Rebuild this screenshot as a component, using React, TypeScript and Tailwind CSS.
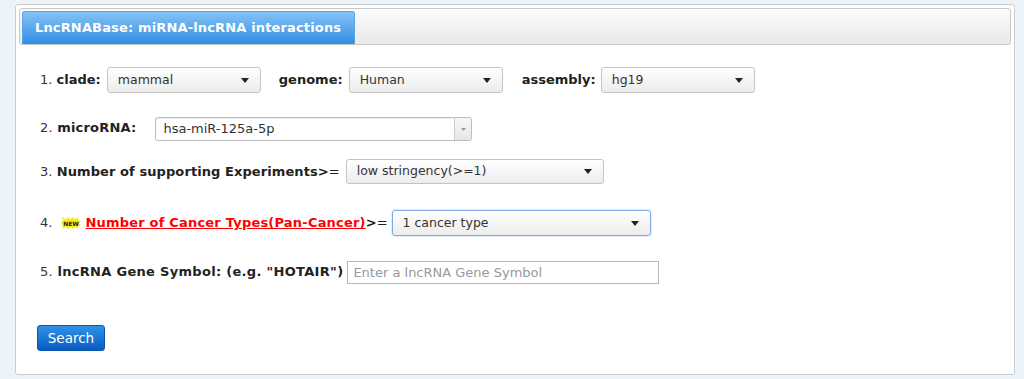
import { ReactNode } from "react";

const Caret = () => (
  <svg width="8" height="5" viewBox="0 0 8 5" className="shrink-0">
    <path d="M0 0h8L4 5z" fill="#222" />
  </svg>
);

interface SelectBoxProps {
  value: string;
  className?: string;
  focused?: boolean;
}

const SelectBox = ({ value, className = "", focused }: SelectBoxProps) => (
  <div
    className={`flex items-center justify-between rounded-[3px] border bg-gradient-to-b from-white to-[#ececec] pl-[10px] pr-[11px] text-[12.5px] text-[#333] ${
      focused ? "border-[#7ea9e6] shadow-[0_0_2px_#9ec3f0]" : "border-[#c4c4c4]"
    } ${className}`}
  >
    <span>{value}</span>
    <Caret />
  </div>
);

const Label = ({ num, children, className = "" }: { num: string; children: ReactNode; className?: string }) => (
  <span className={`text-[13px] text-[#222] ${className}`}>
    <span className="font-normal text-[#333]">{num} </span>
    <span className="font-bold">{children}</span>
  </span>
);

const NewBadge = () => (
  <svg width="20" height="12" viewBox="0 0 20 12" className="ml-[9px] mr-[4px] shrink-0">
    <polygon
      points="0,6 2,3 1,0 5,2 7,0 9,2 12,0 14,2 17,0 17,3 20,4 18,6 20,8 17,9 17,12 14,10 12,12 9,10 7,12 5,10 1,12 2,9"
      fill="#f6f01a"
    />
    <text x="10" y="8.5" textAnchor="middle" fontSize="6" fontWeight="bold" fill="#222" fontFamily="'DejaVu Sans', sans-serif">
      NEW
    </text>
  </svg>
);

export default function App() {
  return (
    <div className="min-h-[379px] bg-[#ecf3f9] px-[15px] pt-[4px] font-['DejaVu_Sans','Verdana',sans-serif]">
      <div className="h-[371px] w-[1000px] rounded-[3px] border border-[#c9cdd1] bg-white p-[3px]">
        {/* tab header */}
        <div className="flex h-[37px] items-end rounded-[3px] border border-[#c8c8c8] bg-gradient-to-b from-[#fbfbfb] to-[#e9e9e9] px-[2px]">
          <div className="flex h-[33px] w-[333px] items-center rounded-t-[3px] border border-b-0 border-[#5aa3e6] bg-gradient-to-b from-[#84c2f5] to-[#2c8de3] pl-[12px] text-[13px] font-bold tracking-[0.15px] text-white">
            LncRNABase: miRNA-lncRNA interactions
          </div>
        </div>

        <div className="pl-[21px]">
          {/* 1 */}
          <div className="mt-[21px] flex h-[26px] items-center pt-[2px]">
            <Label num="1.">clade:</Label>
            <SelectBox value="mammal" className="ml-[6px] h-[26px] w-[154px]" />
            <span className="ml-[18px] text-[13px] font-bold text-[#222]">genome:</span>
            <SelectBox value="Human" className="ml-[6px] h-[26px] w-[154px]" />
            <span className="ml-[19px] text-[13px] font-bold text-[#222]">assembly:</span>
            <SelectBox value="hg19" className="ml-[5px] h-[26px] w-[154px]" />
          </div>

          {/* 2 */}
          <div className="mt-[25px] flex h-[24px] items-center">
            <span className="-mt-[4px]">
              <Label num="2." className="tracking-[0.2px]">microRNA:</Label>
            </span>
            <div className="ml-[19px] flex h-[24px] w-[317px] items-center rounded-[3px] border border-[#bdbdbd] bg-white text-[13px] text-[#333] shadow-[inset_0_1px_1px_#eee]">
              <span className="flex-1 pl-[7px]">hsa-miR-125a-5p</span>
              <div className="flex h-full w-[17px] items-center justify-center rounded-r-[3px] border-l border-[#ccc] bg-gradient-to-b from-[#f7f7f7] to-[#e6e6e6]">
                <svg width="5" height="3" viewBox="0 0 5 3">
                  <path d="M0 0h5L2.5 3z" fill="#999" />
                </svg>
              </div>
            </div>
          </div>

          {/* 3 */}
          <div className="mt-[17px] flex h-[25px] items-center pt-[2px]">
            <Label num="3." className="tracking-[0.08px]">
              Number of supporting Experiments&gt;<span className="font-normal">=</span>
            </Label>
            <SelectBox value="low stringency(>=1)" className="ml-[6px] h-[25px] w-[258px]" />
          </div>

          {/* 4 */}
          <div className="mt-[26px] flex h-[26px] items-center pt-[2px]">
            <span className="text-[13px] text-[#333]">4.</span>
            <NewBadge />
            <a href="#" className="text-[13px] font-bold tracking-[0.2px] text-[#ff0000] underline">
              Number of Cancer Types(Pan-Cancer)
            </a>
            <span className="text-[13px] font-bold text-[#222]">
              &gt;<span className="font-normal">=</span>
            </span>
            <SelectBox value="1 cancer type" focused className="ml-[4px] h-[26px] w-[259px]" />
          </div>

          {/* 5 */}
          <div className="mt-[25px] flex h-[23px] items-center pt-[1px]">
            <Label num="5." className="tracking-[0.3px]">
              lncRNA Gene Symbol: (e.g. "HOTAIR")
            </Label>
            <input
              type="text"
              placeholder="Enter a lncRNA Gene Symbol"
              className="ml-[4px] h-[23px] w-[312px] border border-[#b8b8b8] px-[5px] text-[13px] text-[#333] outline-none placeholder:text-[#999]"
            />
          </div>

          <button className="-ml-[3px] mt-[42px] flex h-[26px] w-[68px] items-center justify-center rounded-[3px] border border-[#0b58ad] bg-gradient-to-b from-[#2f92e6] to-[#0a5cc2] text-[13.5px] text-white">
            Search
          </button>
        </div>
      </div>
    </div>
  );
}
